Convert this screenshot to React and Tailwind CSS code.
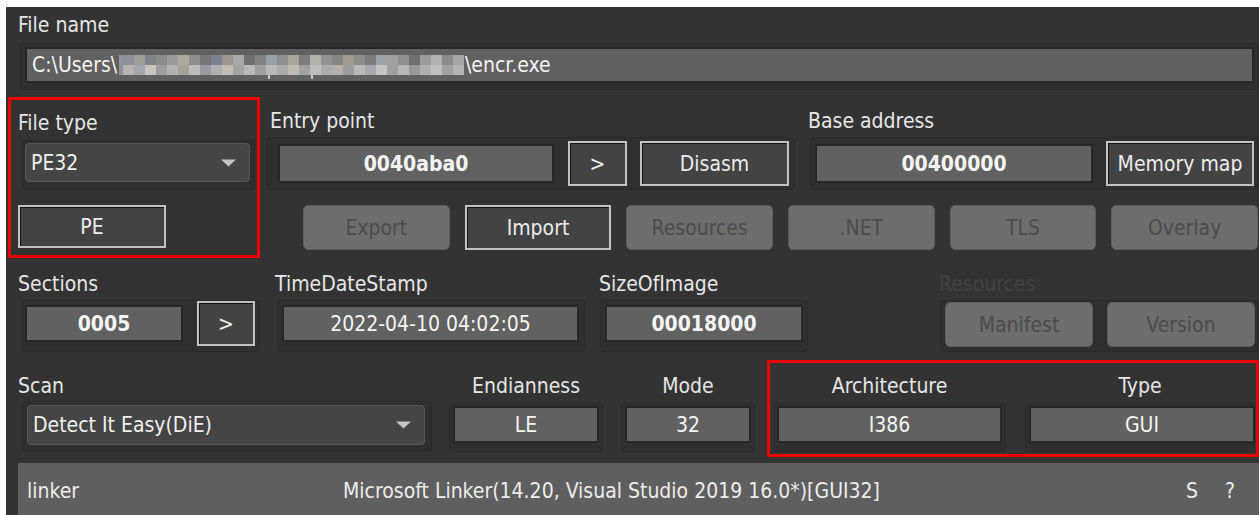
import React from "react";

// Pixelated (redacted) part of the path shown in the file name box
const MOSAIC_TOP = [
  "#8d909b", "#a19d98", "#81828a", "#8c8c8c", "#9b9b9b", "#aeaa9f", "#8e8e8e", "#777777",
  "#7b8191", "#9b9790", "#a9a9a9", "#707070", "#828282", "#97a1a9", "#8f8f8f", "#a8a49b",
  "#7c7c7c", "#b3b1ab", "#939393", "#868686", "#a29c90", "#8c8c8c", "#7d7d7d", "#9ea3a9",
  "#a1a1a1", "#909090", "#6f6f6f", "#9b9b9b", "#b1b1b1", "#8b8b8b", "#a5a5a5",
];
const MOSAIC_BOTTOM = [
  "#b7b3ad", "#a6a6b1", "#c9c4ba", "#9d9d9d", "#b2b2b2", "#a7a39a", "#bcbcbc", "#9a9aa4",
  "#b0b0b0", "#c2bdb3", "#a4a4a4", "#b9b9b9", "#9f9f9f", "#b5b8bd", "#aaaaaa", "#c0bbb0",
  "#a3a3a3", "#bdbdbd", "#acacac", "#b4b0a6", "#9c9c9c", "#b8b8b8", "#a8a8b2", "#c3c3c3",
  "#a0a0a0", "#b6b6b6", "#999999", "#afafaf", "#bfbfbf", "#a2a2a2", "#b3b3b3",
];

function Mosaic() {
  const w = 11;
  return (
    <svg width="346" height="32" viewBox="-4 0 346 32" className="ml-[-4px] shrink-0">
      <rect x={-4} y={6} width={4} height={20} fill="#8f9298" />
      {MOSAIC_TOP.map((c, i) => (
        <rect key={"t" + i} x={i * w} y={6} width={w} height={10} fill={c} />
      ))}
      {MOSAIC_BOTTOM.map((c, i) => (
        <rect key={"b" + i} x={i * w} y={16} width={w} height={10} fill={c} />
      ))}
      <rect x={145} y={26} width={2} height={4} fill="#c8c8c8" />
      <rect x={188} y={26} width={2} height={4} fill="#c8c8c8" />
    </svg>
  );
}

function Frame({ className = "", children }) {
  return (
    <div className={"shrink-0 rounded-[3px] border border-[#2a2a2a] bg-[#2f2f2f] " + className}>
      {children}
    </div>
  );
}

function Field({ className = "", bold = false, children }) {
  return (
    <div
      className={
        "flex shrink-0 items-center justify-center border-2 border-[#272727] bg-[#616161] text-[#f4f4f4] " +
        (bold ? "font-bold " : "") +
        className
      }
    >
      {children}
    </div>
  );
}

function Btn({ className = "", children }) {
  return (
    <div
      className={
        "flex shrink-0 items-center justify-center border-2 border-[#c2c2c2] bg-[#434343] text-[#ececec] shadow-[inset_1px_1px_0_#151515] " +
        className
      }
    >
      {children}
    </div>
  );
}

function OffBtn({ className = "", children }) {
  return (
    <div
      className={
        "flex shrink-0 items-center justify-center rounded-[5px] border border-[#5d5d5d] bg-[#6d6d6d] text-[#4c4c4c] " +
        className
      }
    >
      {children}
    </div>
  );
}

function Combo({ className = "", children }) {
  return (
    <div
      className={
        "flex shrink-0 items-center justify-between rounded-[4px] border border-[#595959] bg-[#454545] pl-[5px] pr-[13px] text-[#f0f0f0] " +
        className
      }
    >
      <span>{children}</span>
      <svg width="15" height="8" viewBox="0 0 15 8">
        <path d="M0 0.5h15L7.5 7.5z" fill="#c4c4c4" />
      </svg>
    </div>
  );
}

export default function App() {
  return (
    <div className="h-[515px] w-[1259px] overflow-hidden bg-white pl-[6px] pt-[7px] font-['DejaVu_Sans_Condensed','DejaVu_Sans',sans-serif] text-[21px] leading-[24px] text-[#e6e6e6]">
      <div className="flex h-[508px] w-[1253px] flex-col overflow-hidden bg-[#333333]">
        {/* File name */}
        <div className="ml-[12px] mt-[6px] h-[24px] shrink-0">File name</div>
        <Frame className="ml-[14px] mt-[6px] h-[47px] w-[1239px] pl-[4px] pt-[3px]">
          <div className="flex h-[36px] w-[1229px] items-center whitespace-nowrap border-2 border-[#272727] bg-[#616161] pl-[5px] text-[#f4f4f4]">
            <span className="inline-block w-[91px] shrink-0">{"C:\\Users\\"}</span>
            <Mosaic />
            <span>{"\\encr.exe"}</span>
          </div>
        </Frame>

        {/* File type / entry point / base address */}
        <div className="mt-[7px] flex h-[161px] shrink-0">
          <div className="ml-[2px] flex h-[161px] w-[252px] shrink-0 flex-col border-[3px] border-[#ee0000]">
            <div className="ml-[7px] mt-[11px] h-[24px]">File type</div>
            <Frame className="ml-[11px] mt-[5px] h-[50px] w-[233px] pl-[2px] pt-[2px]">
              <Combo className="h-[39px] w-[225px]">PE32</Combo>
            </Frame>
            <Btn className="ml-[7px] mt-[15px] h-[43px] w-[148px]">PE</Btn>
          </div>

          <div className="flex flex-col">
            <div className="flex">
              <div className="ml-[6px] flex flex-col">
                <div className="ml-[4px] mt-[12px] h-[24px]">Entry point</div>
                <Frame className="mt-[4px] flex h-[53px] w-[529px] items-center pl-[11px]">
                  <Field bold className="h-[39px] w-[276px]">0040aba0</Field>
                  <Btn className="ml-[14px] h-[45px] w-[59px]">&gt;</Btn>
                  <Btn className="ml-[13px] h-[45px] w-[149px]">Disasm</Btn>
                </Frame>
              </div>
              <div className="ml-[15px] flex flex-col">
                <div className="ml-[-2px] mt-[12px] h-[24px]">Base address</div>
                <Frame className="mt-[4px] flex h-[53px] w-[449px] items-center pl-[4px]">
                  <Field bold className="h-[39px] w-[278px]">00400000</Field>
                  <Btn className="ml-[13px] h-[45px] w-[148px]">Memory map</Btn>
                </Frame>
              </div>
            </div>
            <div className="ml-[43px] mt-[15px] grid w-[955px] grid-cols-6 gap-[15px]">
              <OffBtn className="h-[45px]">Export</OffBtn>
              <Btn className="h-[45px]">Import</Btn>
              <OffBtn className="h-[45px]">Resources</OffBtn>
              <OffBtn className="h-[45px]">.NET</OffBtn>
              <OffBtn className="h-[45px]">TLS</OffBtn>
              <OffBtn className="h-[45px]">Overlay</OffBtn>
            </div>
          </div>
        </div>

        {/* Sections / time stamp / image size / resources */}
        <div className="flex h-[94px] shrink-0 items-start">
          <div className="ml-[12px] mt-[14px] flex flex-col">
            <div className="h-[24px]">Sections</div>
            <Frame className="ml-[4px] mt-[4px] flex h-[52px] w-[238px] items-start pl-[2px]">
              <Field bold className="mt-[4px] h-[37px] w-[158px]">0005</Field>
              <Btn className="ml-[14px] h-[45px] w-[58px]">&gt;</Btn>
            </Frame>
          </div>
          <div className="ml-[15px] mt-[14px] flex flex-col">
            <div className="h-[24px]">TimeDateStamp</div>
            <Frame className="ml-[2px] mt-[4px] flex h-[52px] w-[308px] items-start pl-[4px]">
              <Field className="mt-[4px] h-[37px] w-[297px]">2022-04-10 04:02:05</Field>
            </Frame>
          </div>
          <div className="ml-[14px] mt-[14px] flex flex-col">
            <div className="h-[24px]">SizeOfImage</div>
            <Frame className="ml-[1px] mt-[4px] flex h-[52px] w-[208px] items-start pl-[4px]">
              <Field bold className="mt-[4px] h-[37px] w-[198px]">00018000</Field>
            </Frame>
          </div>
          <div className="ml-[131px] mt-[14px] flex flex-col">
            <div className="h-[24px] text-[#424242]">Resources</div>
            <Frame className="ml-[1px] mt-[4px] flex h-[52px] w-[319px] items-start pl-[4px] pt-[1px]">
              <OffBtn className="h-[45px] w-[148px]">Manifest</OffBtn>
              <OffBtn className="ml-[14px] h-[45px] w-[148px]">Version</OffBtn>
            </Frame>
          </div>
        </div>

        {/* Scan / endianness / mode / architecture / type */}
        <div className="mt-[8px] flex h-[97px] shrink-0 items-start">
          <div className="ml-[12px] mt-[14px] flex flex-col">
            <div className="h-[24px]">Scan</div>
            <Frame className="ml-[4px] mt-[3px] h-[50px] w-[410px] pl-[4px] pt-[3px]">
              <Combo className="h-[40px] w-[398px]">Detect It Easy(DiE)</Combo>
            </Frame>
          </div>
          <div className="ml-[17px] mt-[14px] flex w-[154px] flex-col">
            <div className="h-[24px] text-center">Endianness</div>
            <Frame className="mt-[5px] h-[49px] w-[154px] pl-[3px] pt-[2px]">
              <Field className="h-[37px] w-[146px]">LE</Field>
            </Frame>
          </div>
          <div className="ml-[18px] mt-[14px] flex w-[134px] flex-col">
            <div className="h-[24px] text-center">Mode</div>
            <Frame className="mt-[5px] h-[49px] w-[134px] pl-[3px] pt-[2px]">
              <Field className="h-[37px] w-[126px]">32</Field>
            </Frame>
          </div>
          <div className="ml-[12px] flex h-[97px] w-[492px] shrink-0 border-[3px] border-[#ee0000]">
            <div className="ml-[3px] mt-[11px] flex w-[233px] flex-col">
              <div className="h-[24px] text-center">Architecture</div>
              <Frame className="mt-[5px] h-[49px] w-[233px] pl-[3px] pt-[2px]">
                <Field className="h-[37px] w-[225px]">I386</Field>
              </Frame>
            </div>
            <div className="ml-[19px] mt-[11px] flex w-[230px] flex-col">
              <div className="h-[24px] text-center">Type</div>
              <Frame className="mt-[5px] h-[49px] w-[230px] pl-[3px] pt-[2px]">
                <Field className="h-[37px] w-[226px]">GUI</Field>
              </Frame>
            </div>
          </div>
        </div>

        {/* Detection result bar */}
        <div className="ml-[12px] mt-[6px] flex h-[52px] w-[1241px] shrink-0 items-start whitespace-nowrap bg-[#5f5f5f] pl-[9px] pt-[16px] text-[#ececec]">
          <span className="inline-block w-[316px] shrink-0">linker</span>
          <span>Microsoft Linker(14.20, Visual Studio 2019 16.0*)[GUI32]</span>
          <span className="ml-auto">S</span>
          <span className="ml-[27px] mr-[24px]">?</span>
        </div>
      </div>
    </div>
  );
}
